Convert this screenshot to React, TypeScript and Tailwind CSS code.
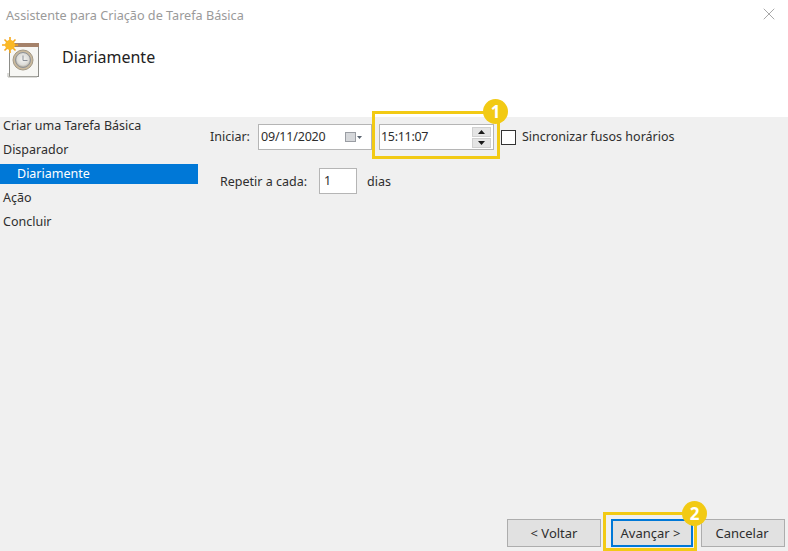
import React from 'react';
import { X } from 'lucide-react';

const steps = [
    { label: 'Criar uma Tarefa Básica' },
    { label: 'Disparador' },
    { label: 'Diariamente', active: true },
    { label: 'Ação' },
    { label: 'Concluir' },
];

const TaskIcon: React.FC = () => (
    <svg width="40" height="44" viewBox="0 0 40 44">
        <defs>
            <radialGradient id="face" cx="50%" cy="45%" r="55%">
                <stop offset="0%" stopColor="#f4f4f2" />
                <stop offset="70%" stopColor="#dcdcd8" />
                <stop offset="100%" stopColor="#a89f8e" />
            </radialGradient>
        </defs>
        {/* stacked pages */}
        <rect x="9" y="9" width="30" height="33" fill="#8d8d88" />
        <rect x="10" y="10" width="28" height="31" fill="#f7f7f4" />
        <path d="M8 38v4h29" fill="none" stroke="#b9b9b3" strokeWidth="1" />
        <rect x="11" y="8" width="28" height="4" fill="#a5826a" />
        {/* clock */}
        <circle cx="23" cy="25" r="10" fill="#c9b99c" stroke="#a49a88" />
        <circle cx="23" cy="25" r="7.500" fill="url(#face)" stroke="#8e939a" strokeWidth="1" />
        <path d="M23 20.500V25.500H27.500" fill="none" stroke="#8a8f96" strokeWidth="1" />
        {/* sun */}
        <g stroke="#f6a81c" strokeWidth="1.600">
            <path d="M10 2v16M2 10h16M4.500 4.500l11 11M15.500 4.500l-11 11" />
        </g>
        <circle cx="10" cy="10" r="5" fill="#fbb925" />
    </svg>
);

const CalendarGlyph: React.FC = () => (
    <span className="flex items-center gap-[1px]">
        <span className="w-[11px] h-[10px] bg-[#d6d8db] border border-[#9a9da3]" />
        <svg width="5" height="3" viewBox="0 0 5 3">
            <path d="M0 0h5L2.500 3z" fill="#5a6470" />
        </svg>
    </span>
);

const SpinButton: React.FC<{ up?: boolean }> = ({ up }) => (
    <span className="w-[19px] h-[10px] bg-[#e4e4e4] border border-[#d0d0d0] flex items-center justify-center">
        <svg width="7" height="4" viewBox="0 0 7 4">
            <path d={up ? 'M0 4h7L3.500 0z' : 'M0 0h7L3.500 4z'} fill="#1a1a1a" />
        </svg>
    </span>
);

const Badge: React.FC<{ n: number; className: string }> = ({ n, className }) => (
    <span
        className={`absolute w-[25px] h-[25px] rounded-full bg-[#f2ca14] text-white font-bold text-[17px] leading-none flex items-center justify-center ${className}`}
    >
        {n}
    </span>
);

export default function App() {
    return (
        <div className="w-[788px] h-[551px] bg-[#f0f0f0] flex flex-col overflow-hidden relative text-[12.500px] text-[#2e2e2e] font-['Noto_Sans',sans-serif]">
            {/* Header */}
            <div className="h-[117px] shrink-0 bg-white flex flex-col">
                <div className="h-[30px] pl-[6px] pr-[9px] flex items-center justify-between">
                    <span className="text-[#9a9a9a] text-[12.650px]">Assistente para Criação de Tarefa Básica</span>
                    <X size={20} strokeWidth={0.9} className="text-[#8a8a8a] -mt-[2px]" />
                </div>
                <div className="flex items-center mt-[5px] gap-[22px]">
                    <TaskIcon />
                    <span className="text-[16px] text-[#222]">Diariamente</span>
                </div>
            </div>

            <div className="flex-1 flex">
                {/* Steps */}
                <div className="w-[198px] shrink-0 -mt-[3px] flex flex-col">
                    {steps.map((s) => (
                        <div
                            key={s.label}
                            className={
                                s.active
                                    ? 'h-[20px] my-[2px] pl-[17px] flex items-center bg-[#0078d7] text-white'
                                    : 'h-[24px] pl-[3px] flex items-center'
                            }
                        >
                            {s.label}
                        </div>
                    ))}
                </div>

                {/* Form */}
                <div className="flex-1 flex flex-col pt-[7px]">
                    <div className="flex items-center h-[26px] pl-[12px]">
                        <span className="w-[48px]">Iniciar:</span>
                        <div className="w-[114px] h-[26px] bg-white border border-[#b5b5b5] flex items-center justify-between pl-[2px] pr-[9px]">
                            <span className="tracking-[-0.2px]">09/11/2020</span>
                            <CalendarGlyph />
                        </div>
                        <div className="ml-[7px] w-[115px] h-[26px] bg-white border border-[#b5b5b5] flex items-center justify-between pl-[1px] pr-[2px]">
                            <span className="tracking-[-0.3px]">15:11:07</span>
                            <span className="flex flex-col gap-[1px]">
                                <SpinButton up />
                                <SpinButton />
                            </span>
                        </div>
                        <span className="ml-[7px] w-[15px] h-[15px] bg-white border border-[#333]" />
                        <span className="ml-[6px]">Sincronizar fusos horários</span>
                    </div>
                    <div className="flex items-center h-[26px] mt-[18px] pl-[22px]">
                        <span className="w-[99px] pt-[3px]">Repetir a cada:</span>
                        <div className="w-[38px] h-[26px] bg-white border border-[#b5b5b5] flex items-center pl-[4px]">1</div>
                        <span className="ml-[10px] pt-[3px]">dias</span>
                    </div>
                </div>
            </div>

            {/* Footer buttons */}
            <div className="h-[32px] shrink-0 flex pl-[507px]">
                <button className="w-[94px] h-[28px] pt-[1px] bg-[#e1e1e1] border border-[#adadad] text-[13px]">&lt; Voltar</button>
                <button className="ml-[10px] w-[82px] h-[28px] pt-[1px] pr-[3px] bg-[#e1e1e1] border-2 border-[#0078d7] text-[13px] whitespace-nowrap">Avançar &gt;</button>
                <button className="ml-[8px] w-[84px] h-[28px] pt-[1px] pr-[2px] bg-[#e1e1e1] border border-[#adadad] text-[13px]">Cancelar</button>
            </div>

            {/* Annotations over the screenshot */}
            <div className="absolute left-[372px] top-[111px] w-[128px] h-[48px] border-[3px] border-[#f2ca14]" />
            <Badge n={1} className="left-[483px] top-[99px]" />
            <div className="absolute left-[603px] top-[512px] w-[94px] h-[39px] border-[3px] border-[#f2ca14]" />
            <Badge n={2} className="left-[682px] top-[501px]" />
        </div>
    );
}
